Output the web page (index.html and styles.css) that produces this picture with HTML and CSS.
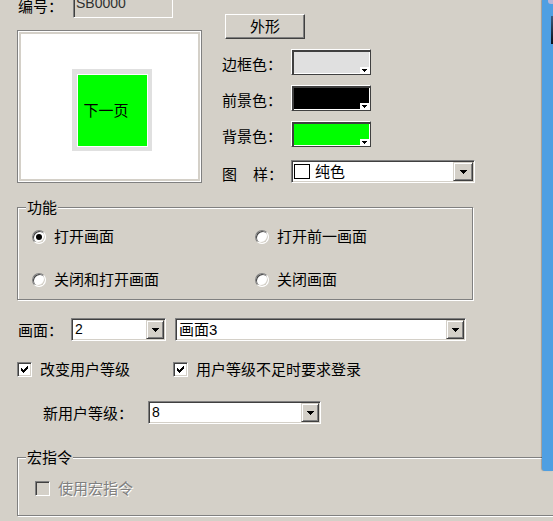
FILE: index.html
```html
<!DOCTYPE html>
<html lang="zh-CN">
<head>
<meta charset="utf-8">
<title>按钮属性</title>
<link rel="stylesheet" href="styles.css">
</head>
<body>
<div class="page">
  <div class="top">
    <div class="left-col">
      <div class="id-row">
        <span class="id-label">编号：</span>
        <div class="id-box">SB0000</div>
      </div>
      <div class="preview">
        <div class="preview-canvas">
          <div class="btn-frame"><div class="btn-face">下一页</div></div>
        </div>
      </div>
    </div>
    <div class="right-col">
      <div class="push-btn">外形</div>
      <div class="field">
        <span class="lbl">边框色：</span>
        <div class="swatch sw-border"><span class="sw-drop"><svg width="5" height="3" viewBox="0 0 5 3" shape-rendering="crispEdges"><path d="M0 0H5V1H4V2H3V3H2V2H1V1H0Z"/></svg></span></div>
      </div>
      <div class="field">
        <span class="lbl">前景色：</span>
        <div class="swatch sw-fore"><span class="sw-drop"><svg width="5" height="3" viewBox="0 0 5 3" shape-rendering="crispEdges"><path d="M0 0H5V1H4V2H3V3H2V2H1V1H0Z"/></svg></span></div>
      </div>
      <div class="field">
        <span class="lbl">背景色：</span>
        <div class="swatch sw-back"><span class="sw-drop"><svg width="5" height="3" viewBox="0 0 5 3" shape-rendering="crispEdges"><path d="M0 0H5V1H4V2H3V3H2V2H1V1H0Z"/></svg></span></div>
      </div>
      <div class="field field-pattern">
        <span class="lbl"><span class="lbl-gap">图</span>样：</span>
        <div class="select sel-pattern">
          <div class="sel-val pattern-val"><span class="pattern-icon"></span>纯色</div>
          <div class="sel-btn"><svg width="7" height="4" viewBox="0 0 7 4" shape-rendering="crispEdges"><path d="M0 0H7V1H6V2H5V3H4V4H3V3H2V2H1V1H0Z"/></svg></div>
        </div>
      </div>
    </div>
  </div>

  <div class="group func">
    <span class="group-title">功能</span>
    <div class="opt"><span class="radio on"></span><span>打开画面</span></div>
    <div class="opt"><span class="radio"></span><span>打开前一画面</span></div>
    <div class="opt"><span class="radio"></span><span>关闭和打开画面</span></div>
    <div class="opt"><span class="radio"></span><span>关闭画面</span></div>
  </div>

  <div class="screen-row">
    <span class="screen-lbl">画面：</span>
    <div class="select sel-no">
      <div class="sel-val num">2</div>
      <div class="sel-btn"><svg width="7" height="4" viewBox="0 0 7 4" shape-rendering="crispEdges"><path d="M0 0H7V1H6V2H5V3H4V4H3V3H2V2H1V1H0Z"/></svg></div>
    </div>
    <div class="select sel-name">
      <div class="sel-val">画面3</div>
      <div class="sel-btn"><svg width="7" height="4" viewBox="0 0 7 4" shape-rendering="crispEdges"><path d="M0 0H7V1H6V2H5V3H4V4H3V3H2V2H1V1H0Z"/></svg></div>
    </div>
  </div>

  <div class="check-row">
    <div class="chk-item chk-first">
      <span class="chk"><svg width="7" height="7" viewBox="0 0 7 7" shape-rendering="crispEdges"><path d="M6 0H7V3H6V4H5V5H4V6H3V7H2V6H1V5H0V2H1V3H2V4H3V3H4V2H5V1H6Z"/></svg></span>
      <span>改变用户等级</span>
    </div>
    <div class="chk-item">
      <span class="chk"><svg width="7" height="7" viewBox="0 0 7 7" shape-rendering="crispEdges"><path d="M6 0H7V3H6V4H5V5H4V6H3V7H2V6H1V5H0V2H1V3H2V4H3V3H4V2H5V1H6Z"/></svg></span>
      <span>用户等级不足时要求登录</span>
    </div>
  </div>

  <div class="level-row">
    <span class="level-lbl">新用户等级：</span>
    <div class="select sel-level">
      <div class="sel-val num">8</div>
      <div class="sel-btn"><svg width="7" height="4" viewBox="0 0 7 4" shape-rendering="crispEdges"><path d="M0 0H7V1H6V2H5V3H4V4H3V3H2V2H1V1H0Z"/></svg></div>
    </div>
  </div>

  <div class="group macro">
    <span class="group-title">宏指令</span>
    <div class="chk-item disabled">
      <span class="chk chk-off"></span>
      <span>使用宏指令</span>
    </div>
  </div>
</div>

<div class="edge"><span class="edge-top"></span><span class="edge-deco"></span></div>
</body>
</html>
```

FILE: styles.css
```css
* { box-sizing: border-box; }
html, body { margin: 0; padding: 0; }
body {
  width: 553px;
  height: 521px;
  overflow: hidden;
  position: relative;
  background: #d4d0c8;
  color: #000;
  font-family: "Liberation Sans", "Noto Sans CJK SC", sans-serif;
  font-size: 15px;
  line-height: 17px;
}
.page { padding-left: 17px; }

/* ---------- top area ---------- */
.top { display: flex; gap: 20px; }
.left-col { width: 185px; flex: none; }
.id-row { display: flex; align-items: center; height: 24px; margin-top: -6px; }
.id-label { width: 56px; padding-left: 1px; }
.id-box {
  width: 100px;
  height: 24px;
  border: 1px solid;
  border-color: #808080 #fff #fff #808080;
  box-shadow: inset 1px 1px 0 #404040;
  padding-left: 2px;
  color: #303030;
  font-size: 14px;
  line-height: 17px;
}
.preview {
  margin-top: 12px;
  height: 153px;
  border: 1px solid #808080;
  padding: 3px;
  box-shadow: inset 0 0 0 1px #fff;
}
.preview-canvas {
  height: 100%;
  background: #fff;
  display: flex;
  align-items: center;
  justify-content: center;
  padding: 6px 0 0 4px;
}
.btn-frame {
  width: 80px;
  height: 82px;
  background: #e0e0e0;
  padding: 5px 4px 4px 5px;
}
.btn-face {
  height: 100%;
  border: 1px solid #fff;
  background: #00ff00;
  display: flex;
  align-items: center;
  padding-left: 6px;
}

.right-col { padding-top: 14px; display: flex; flex-direction: column; }
.push-btn {
  width: 80px;
  height: 25px;
  margin-left: 3px;
  border: 1px solid;
  border-color: #fff #404040 #404040 #fff;
  box-shadow: inset -1px -1px 0 #808080;
  display: flex;
  align-items: center;
  justify-content: center;
}
.field { display: flex; align-items: center; margin-top: 10px; }
.lbl { width: 69px; flex: none; padding-top: 5px; }
.lbl-gap { margin-right: 16px; }
.swatch {
  position: relative;
  width: 80px;
  height: 26px;
  border: 1px solid;
  border-color: #fff #404040 #404040 #fff;
  box-shadow: inset 1px 1px 0 #404040, inset 2px 2px 0 #404040, inset -1px -1px 0 #fff;
}
.sw-border { background: #e0e0e0; }
.sw-fore { background: #000; }
.sw-back { background: #00ff00; }
.sw-drop {
  position: absolute;
  right: 1px;
  bottom: 1px;
  width: 9px;
  height: 6px;
  background: #fff;
  display: flex;
  align-items: center;
  justify-content: center;
}
.sw-drop svg { display: block; }
.field-pattern { margin-top: 13px; }

/* ---------- combo boxes ---------- */
.select {
  display: flex;
  height: 23px;
  flex: none;
  background: #fff;
  border: 1px solid;
  border-color: #808080 #fff #fff #808080;
  box-shadow: inset 1px 1px 0 #404040, inset -1px -1px 0 #d4d0c8;
  padding: 1px;
}
.sel-val {
  flex: 1;
  min-width: 0;
  display: flex;
  align-items: center;
  padding-left: 2px;
  white-space: nowrap;
}
.num { font-size: 14px; }
.sel-btn {
  flex: none;
  width: 18px;
  background: #d4d0c8;
  border: 1px solid;
  border-color: #d4d0c8 #404040 #404040 #d4d0c8;
  box-shadow: inset 1px 1px 0 #fff, inset -1px -1px 0 #808080;
  display: flex;
  align-items: center;
  justify-content: center;
}
.sel-btn svg { display: block; }
.sel-pattern { width: 184px; }
.sel-pattern .sel-btn { width: 20px; }
.pattern-val { padding-left: 1px; }
.pattern-icon {
  width: 16px;
  height: 15px;
  border: 1px solid #000;
  background: #fff;
  margin-right: 5px;
  flex: none;
}

/* ---------- group boxes ---------- */
.group {
  position: relative;
  border: 1px solid #808080;
  box-shadow: inset 1px 1px 0 #fff, 1px 1px 0 #fff;
}
.group-title {
  position: absolute;
  top: -9px;
  left: 8px;
  padding: 0 1px;
  background: #d4d0c8;
  line-height: 17px;
}
.func {
  margin-top: 24px;
  width: 456px;
  height: 93px;
  padding: 20px 0 0 14px;
  display: grid;
  grid-template-columns: 223px 1fr;
  row-gap: 26px;
  align-content: start;
}
.opt { display: flex; align-items: center; gap: 8px; height: 17px; }
.radio {
  position: relative;
  flex: none;
  width: 14px;
  height: 14px;
  border-radius: 50%;
  background: #fff;
  border: 1px solid;
  border-color: #808080 #fff #fff #808080;
  box-shadow: inset 1px 1px 0 #404040, inset -1px -1px 0 #d4d0c8;
}
.radio.on::after {
  content: "";
  position: absolute;
  left: 3px;
  top: 3px;
  width: 6px;
  height: 6px;
  border-radius: 50%;
  background: #000;
}

/* ---------- screen row ---------- */
.screen-row { display: flex; align-items: center; margin-top: 18px; }
.screen-lbl { width: 54px; padding-left: 1px; padding-top: 1px; }
.sel-no { width: 95px; margin-right: 9px; }
.sel-name { width: 291px; }

/* ---------- checkboxes ---------- */
.check-row { display: flex; align-items: center; height: 17px; margin-top: 20px; }
.chk-item { display: flex; align-items: center; gap: 8px; height: 17px; }
.chk-first { width: 156px; }
.chk {
  flex: none;
  width: 15px;
  height: 15px;
  background: #fff;
  border: 1px solid;
  border-color: #808080 #fff #fff #808080;
  box-shadow: inset 1px 1px 0 #404040, inset -1px -1px 0 #d4d0c8;
  display: flex;
  align-items: center;
  justify-content: center;
}
.chk svg { display: block; }
.chk-off { background: #d4d0c8; }
.disabled { color: #808080; text-shadow: 1px 1px 0 #fff; }

/* ---------- level row ---------- */
.level-row { display: flex; align-items: center; margin-top: 23px; padding-left: 26px; }
.level-lbl { width: 105px; padding-top: 1px; }
.sel-level { width: 173px; }

/* ---------- macro group ---------- */
.macro {
  margin-top: 33px;
  width: 545px;
  height: 59px;
  padding: 22px 0 0 17px;
}

/* ---------- window edge on the right ---------- */
.edge {
  position: absolute;
  top: 0;
  right: 0;
  width: 11px;
  height: 471px;
  background: #4f9fe2;
  border-bottom-left-radius: 3px;
  box-shadow: -1px 0 1px rgba(0, 0, 0, 0.25);
}
.edge-top {
  position: absolute;
  top: 0;
  right: 0;
  width: 5px;
  height: 4px;
  background: #b9b6d8;
  border-bottom-left-radius: 3px;
}
.edge-deco {
  position: absolute;
  top: 16px;
  right: 0;
  width: 2px;
  height: 28px;
  background: linear-gradient(#3a5c80, #0b0f18);
}
```
